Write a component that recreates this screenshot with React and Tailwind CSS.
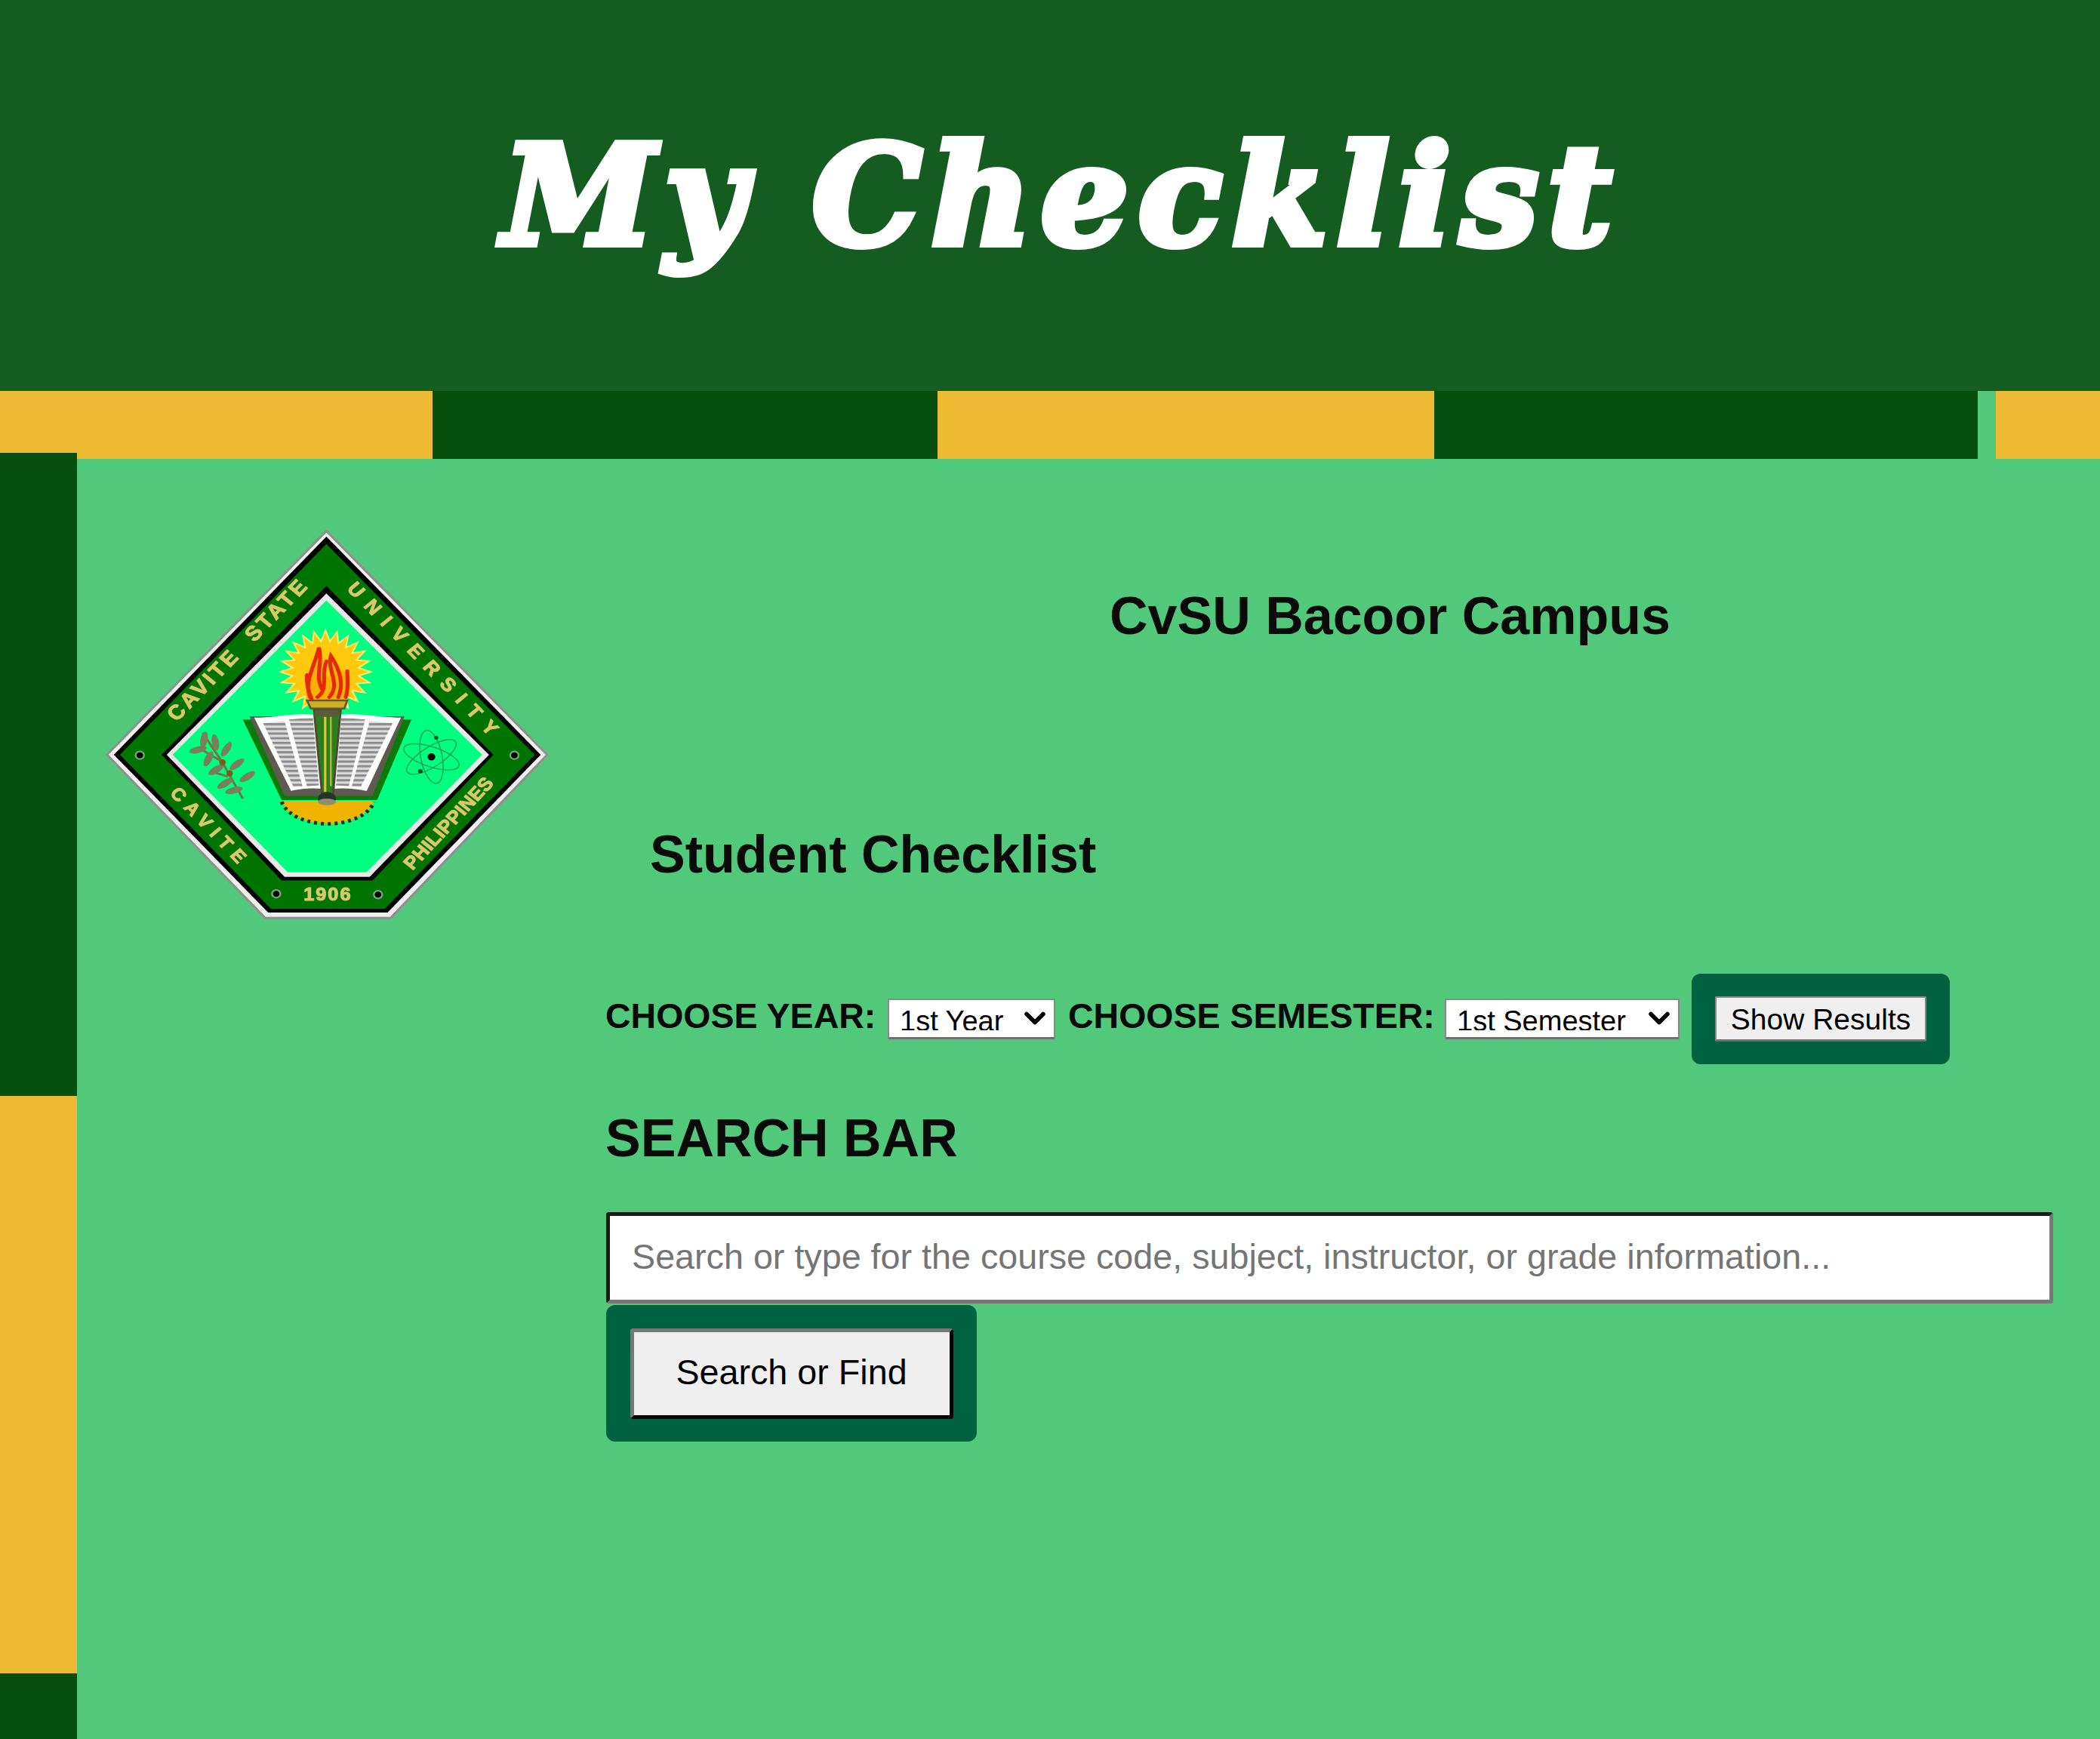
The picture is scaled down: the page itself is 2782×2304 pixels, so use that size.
import { ChevronDown } from "lucide-react";

const sunPoints = () => {
  const pts = [];
  for (let i = 0; i < 48; i++) {
    const r = i % 2 === 0 ? 152 : 112;
    const a = (i * Math.PI) / 24;
    pts.push(`${787 + r * Math.cos(a)},${578 + r * Math.sin(a)}`);
  }
  return pts.join(" ");
};

const Leaf = ({ x, y, r }) => (
  <ellipse cx={x} cy={y} rx="30" ry="12" fill="#77825a" transform={`rotate(${r} ${x} ${y})`} />
);

// CvSU seal, coordinates follow a 1568 box squeezed to 620x570
const Seal = () => (
  <svg width="620" height="570" viewBox="0 0 1568 1568" preserveAspectRatio="none" className="block blur-[0.7px]">
    <defs>
      <path id="edgeTopLeft" d="M158 880 L790 175" />
      <path id="edgeTopRight" d="M790 175 L1420 880" />
      <path id="edgeBottomLeft" d="M158 880 L617 1395" />
      <path id="edgeBottomRight" d="M975 1395 L1420 880" />
      <pattern id="pageLines" width="12" height="17" patternUnits="userSpaceOnUse">
        <rect width="12" height="9" fill="#8b8b8b" />
        <rect y="9" width="12" height="8" fill="#dcdcdc" />
      </pattern>
    </defs>

    <polygon points="790,65 1530,880 1005,1475 585,1475 55,880" fill="#efefef" stroke="#8f8f8f" strokeWidth="8" strokeLinejoin="round" />
    <polygon points="790,85 1508,880 995,1455 595,1455 78,880" fill="#000" />
    <polygon points="790,112 1488,880 985,1442 605,1442 98,880" fill="#007400" />
    <polygon points="790,265 1350,880 945,1338 640,1338 238,880" fill="#000" />
    <polygon points="790,292 1335,880 935,1325 650,1325 255,880" fill="#e8e8e8" />
    <polygon points="790,318 1312,880 925,1308 660,1308 275,880" fill="#00ff80" />

    <g fill="#dcc869" stroke="#dcc869" strokeWidth="3" fontFamily="Liberation Sans, sans-serif" fontWeight="700" fontSize="68">
      <text dominantBaseline="middle" wordSpacing="36" fontSize="74">
        <textPath href="#edgeTopLeft" startOffset="175" textLength="660" lengthAdjust="spacing">CAVITE STATE</textPath>
      </text>
      <text dominantBaseline="middle">
        <textPath href="#edgeTopRight" startOffset="120" textLength="720" lengthAdjust="spacing">UNIVERSITY</textPath>
      </text>
      <text dominantBaseline="middle" fontSize="64">
        <textPath href="#edgeBottomLeft" startOffset="176" textLength="345" lengthAdjust="spacing">CAVITE</textPath>
      </text>
      <text dominantBaseline="middle" fontSize="66">
        <textPath href="#edgeBottomRight" startOffset="137" textLength="420" lengthAdjust="spacing">PHILIPPINES</textPath>
      </text>
      <text x="795" y="1395" textAnchor="middle" dominantBaseline="middle" fontSize="64" letterSpacing="5">1906</text>
    </g>

    {[[165, 882], [1420, 882], [622, 1387], [963, 1390]].map(([x, y]) => (
      <circle key={x} cx={x} cy={y} r="14" fill="#000" stroke="#7da07d" strokeWidth="6" />
    ))}

    <polygon points={sunPoints()} fill="#ffc90e" stroke="#fff176" strokeWidth="5" />
    <path d="M725 680 C715 610 745 570 765 480 C790 530 770 560 800 600 C805 560 800 530 830 580 C850 560 850 590 862 570 C872 620 860 660 860 680 Z" fill="#ffb000" />
    <g fill="none" stroke="#e52a00" strokeWidth="13" strokeLinecap="round">
      <path d="M735 670 C715 610 750 560 765 490 C780 540 750 590 775 640" />
      <path d="M760 670 C800 640 770 590 790 540" />
      <path d="M800 670 C840 620 790 570 805 520 C835 570 850 620 830 670" />
      <path d="M855 670 C865 640 860 610 860 575" />
      <path d="M725 590 C722 625 730 650 740 675" />
    </g>

    <polygon points="510,752 1075,752 960,1045 640,1045" fill="#0b7a0b" />
    <polygon points="532,740 1052,740 945,1030 650,1030" fill="#5f5a50" />
    <path d="M548 745 C620 745 690 725 750 735 L780 1005 C740 1000 700 1005 672 1012 Z" fill="#fff" />
    <path d="M835 735 C890 725 970 745 1040 745 L925 1012 C890 1005 850 1000 810 1005 Z" fill="#fff" />
    <polygon points="578,765 650,758 710,995 680,998" fill="url(#pageLines)" />
    <polygon points="665,752 745,745 765,992 725,995" fill="url(#pageLines)" />
    <polygon points="840,745 920,752 865,995 822,992" fill="url(#pageLines)" />
    <polygon points="935,758 1012,765 905,998 875,995" fill="url(#pageLines)" />

    <polygon points="748,716 838,716 812,1030 776,1030" fill="#2e7d1e" stroke="#4b4a30" strokeWidth="7" />
    <rect x="782" y="725" width="8" height="290" fill="#e6c328" />
    <rect x="802" y="725" width="6" height="270" fill="#b8b832" />
    <polygon points="725,682 860,682 850,712 738,712" fill="#cfae22" stroke="#5b5a38" strokeWidth="7" />
    <rect x="750" y="718" width="85" height="24" fill="#5b5a38" />
    <ellipse cx="792" cy="1040" rx="30" ry="24" fill="#26312a" />

    <path d="M640 1048 L950 1048 C930 1105 860 1130 795 1130 C730 1130 660 1105 640 1048 Z" fill="#efb300" />
    <path d="M640 1052 C660 1105 730 1132 795 1132 C860 1132 930 1105 950 1052" fill="none" stroke="#2d2a10" strokeWidth="13" strokeDasharray="10 13" />
    <ellipse cx="792" cy="1052" rx="30" ry="12" fill="#8d8d70" />

    <g>
      <path d="M375 800 L440 905 L510 1040 M370 860 L440 905 M460 960 L400 940" stroke="#6d7a45" strokeWidth="8" fill="none" />
      <Leaf x="380" y="825" r="-80" />
      <Leaf x="360" y="862" r="-15" />
      <Leaf x="418" y="835" r="80" />
      <Leaf x="395" y="895" r="-65" />
      <Leaf x="455" y="860" r="-60" />
      <Leaf x="420" y="935" r="-35" />
      <Leaf x="490" y="915" r="-40" />
      <Leaf x="450" y="985" r="-35" />
      <Leaf x="525" y="960" r="-35" />
      <Leaf x="480" y="1010" r="-15" />
      <circle cx="442" cy="908" r="11" fill="#7a5b1e" />
      <circle cx="466" cy="948" r="11" fill="#7a5b1e" />
    </g>

    <g fill="none" stroke="#17a556" strokeWidth="4">
      <ellipse cx="1142" cy="888" rx="36" ry="98" transform="rotate(-10 1142 888)" />
      <ellipse cx="1142" cy="888" rx="36" ry="98" transform="rotate(55 1142 888)" />
      <ellipse cx="1142" cy="888" rx="36" ry="98" transform="rotate(-70 1142 888)" />
    </g>
    <circle cx="1142" cy="888" r="13" fill="#000" />
    <circle cx="1158" cy="818" r="7" fill="#1a4d2c" />
    <circle cx="1105" cy="940" r="8" fill="#1a4d2c" />
  </svg>
);

const YearSelect = ({ className, options }) => (
  <div className={`relative shrink-0 ${className}`}>
    <select className="h-full w-full appearance-none rounded-[2px] border-2 border-[#8a8a8a] border-b-[3px] border-b-[#6f6f6f] bg-white pb-[9px] pl-[14px] font-['Liberation_Sans',Arial,sans-serif] text-[38px] text-black">
      {options.map((opt) => (
        <option key={opt}>{opt}</option>
      ))}
    </select>
    <ChevronDown className="pointer-events-none absolute right-[5px] top-[4px] h-[44px] w-[44px] text-black" strokeWidth={3} />
  </div>
);

export default function App() {
  return (
    <div className="h-[2304px] w-[2782px] overflow-hidden bg-[#52c97a] font-['Liberation_Sans',Arial,sans-serif] text-[#0a0a0a]">
      <header className="flex h-[518px] items-center justify-center bg-[#155c20]">
        <h1 className="ml-[32px] font-['DejaVu_Serif',serif] text-[182px] font-bold italic leading-none tracking-[13px] text-white [-webkit-text-stroke:10px_white]">
          My Checklist
        </h1>
      </header>

      <div className="flex h-[90px]">
        <div className="w-[573px] bg-[#edba33]" />
        <div className="w-[669px] bg-[#074f0e]" />
        <div className="w-[658px] bg-[#edba33]" />
        <div className="w-[720px] bg-[#074f0e]" />
        <div className="w-[24px]" />
        <div className="flex-1 bg-[#edba33]" />
      </div>

      <div className="-mt-[8px] flex h-[1704px]">
        <aside className="flex w-[102px] shrink-0 flex-col">
          <div className="h-[852px] bg-[#074f0e]" />
          <div className="h-[765px] bg-[#edba33]" />
          <div className="flex-1 bg-[#074f0e]" />
        </aside>

        <div className="ml-[18px] mt-[80px] shrink-0">
          <Seal />
        </div>

        <main className="ml-[62px] flex w-[1930px] flex-col">
          <h2 className="mt-[176px] pl-[668px] text-[70px] font-bold leading-[80px]">CvSU Bacoor Campus</h2>
          <h2 className="mt-[236px] pl-[59px] text-[70px] font-bold leading-[80px]">Student Checklist</h2>

          <div className="mt-[118px] flex h-[120px] items-center">
            <label className="w-[374px] shrink-0 pb-[6px] text-[46.5px] font-bold">CHOOSE YEAR:</label>
            <YearSelect className="h-[54px] w-[222px]" options={["1st Year", "2nd Year", "3rd Year", "4th Year"]} />
            <label className="ml-[17px] w-[499px] shrink-0 pb-[6px] text-[46.5px] font-bold">CHOOSE SEMESTER:</label>
            <YearSelect className="h-[54px] w-[311px]" options={["1st Semester", "2nd Semester", "Midyear"]} />
            <div className="ml-[16px] flex h-[120px] w-[342px] items-center justify-center rounded-[12px] bg-[#006241]">
              <button className="h-[60px] w-[280px] rounded-[2px] border-2 border-[#8a8a8a] border-b-[3px] border-b-[#6f6f6f] bg-[#efefef] pb-[8px] text-[39px] text-black">
                Show Results
              </button>
            </div>
          </div>

          <h2 className="mt-[58px] text-[70px] font-bold leading-[80px]">SEARCH BAR</h2>

          <input
            type="text"
            placeholder="Search or type for the course code, subject, instructor, or grade information..."
            className="ml-[1px] mt-[58px] h-[121px] w-[1917px] rounded-[4px] border-[5px] border-b-[#777777] border-l-[#1a1a1a] border-r-[#777777] border-t-[#1a1a1a] bg-white pb-[3px] pl-[29px] text-[46.7px] text-black placeholder:text-[#757575]"
          />

          <div className="ml-[1px] mt-[2px] flex h-[181px] w-[491px] items-center justify-center rounded-[12px] bg-[#006241]">
            <button className="h-[120px] w-[428px] rounded-[4px] border-[5px] border-b-black border-l-[#777777] border-r-black border-t-[#777777] bg-[#efefef] pb-[3px] text-[46.7px] text-black">
              Search or Find
            </button>
          </div>
        </main>
      </div>
    </div>
  );
}
